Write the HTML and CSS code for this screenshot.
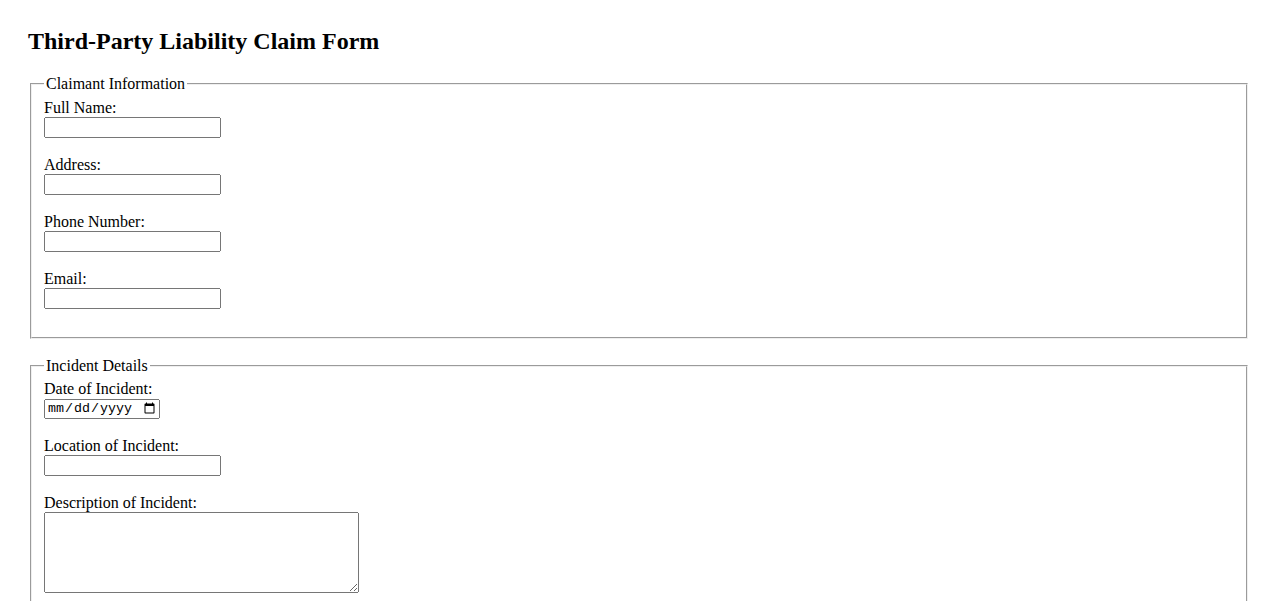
FILE: index.html
```html
<!DOCTYPE html>
<html lang="en">
<head>
    <meta charset="UTF-8">
    <meta name="viewport" content="width=device-width, initial-scale=1.0">
    <title>Third-Party Liability Claim Form</title>
    <link rel="stylesheet" href="styles.css">
</head>
<body>
    <h1>Third-Party Liability Claim Form</h1>
    <form>
        <fieldset>
            <legend>Claimant Information</legend>
            <label for="name">Full Name:</label><br>
            <input type="text" id="name" name="name"><br><br>
            <label for="address">Address:</label><br>
            <input type="text" id="address" name="address"><br><br>
            <label for="phone">Phone Number:</label><br>
            <input type="tel" id="phone" name="phone"><br><br>
            <label for="email">Email:</label><br>
            <input type="email" id="email" name="email"><br><br>
        </fieldset>
        <br>
        <fieldset>
            <legend>Incident Details</legend>
            <label for="date">Date of Incident:</label><br>
            <input type="date" id="date" name="date"><br><br>
            <label for="location">Location of Incident:</label><br>
            <input type="text" id="location" name="location"><br><br>
            <label for="description">Description of Incident:</label><br>
            <textarea id="description" name="description" rows="5" cols="40"></textarea><br><br>
        </fieldset>
    </form>
</body>
</html>
```

FILE: styles.css
```css
body {
    font-family: "Liberation Serif", "Times New Roman", serif;
    margin: 8px;
    padding: 20px;
}
h1 {
    font-size: 24px;
    margin: 0 0 20px 0;
}
input, textarea {
    font-family: "Liberation Sans", Arial, sans-serif;
    box-sizing: border-box;
}
input {
    width: 177px;
    height: 21px;
}
input[type="date"] {
    font-family: "Liberation Mono", monospace;
    width: 116px;
    height: 20px;
}
textarea {
    font-family: "Liberation Mono", monospace;
    width: 315px;
    height: 81px;
    vertical-align: text-bottom;
}
```
